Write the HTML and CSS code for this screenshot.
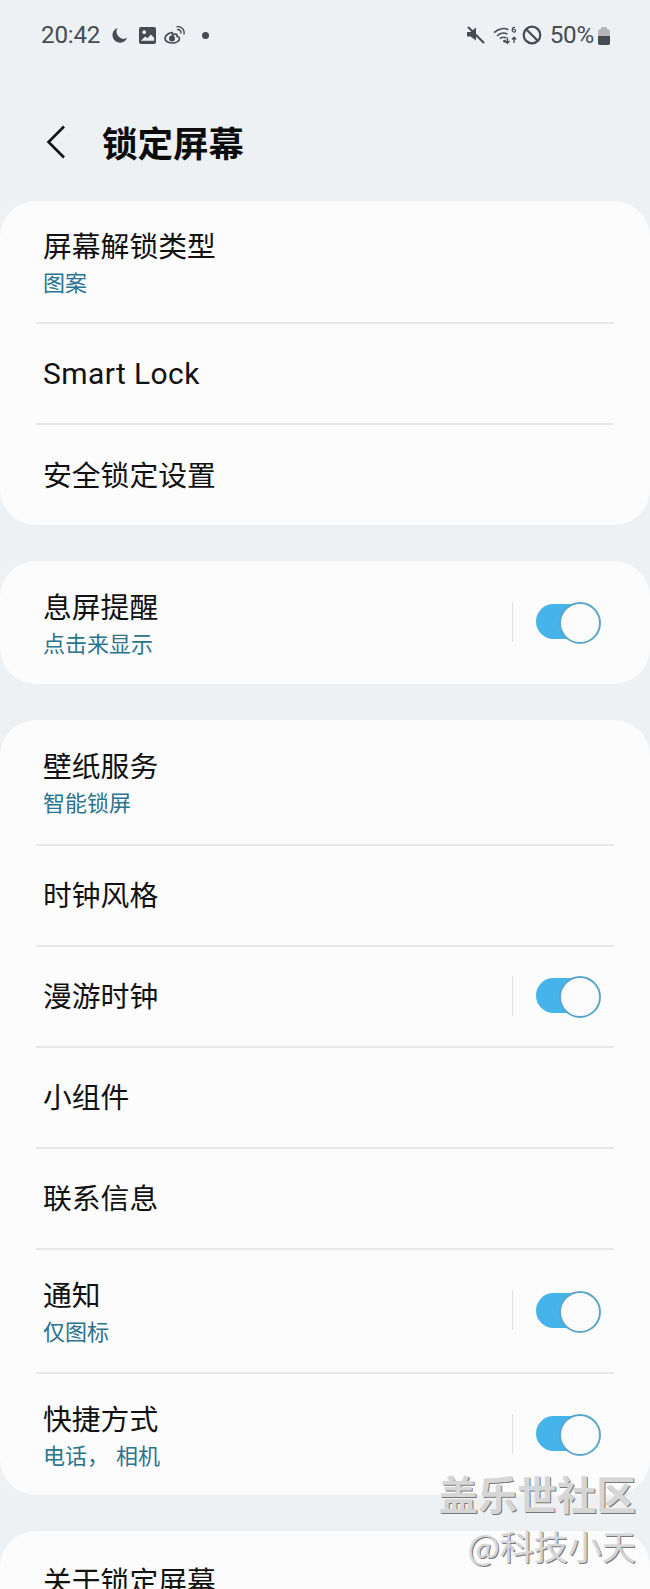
FILE: index.html
```html
<!DOCTYPE html>
<html lang="zh-CN">
<head>
<meta charset="utf-8">
<title>锁定屏幕</title>
<link rel="stylesheet" href="styles.css">
</head>
<body>
<div class="page">
  <header class="status">
    <div class="status-left">
      <span class="clock">20:42</span>
      <svg class="ic moon" viewBox="0 0 18 18"><path d="M7 1a8 8 0 1 0 10 10.5A7.5 7.5 0 0 1 7 1z"/></svg>
      <svg class="ic pic" viewBox="0 0 18 18"><path fill-rule="evenodd" d="M2 0h14a2 2 0 0 1 2 2v14a2 2 0 0 1-2 2H2a2 2 0 0 1-2-2V2a2 2 0 0 1 2-2zm0 14.500h14v-3l-3.500-3.500-3.500 4-2.500-2zM5.500 3.500a2 2 0 1 0 0 4 2 2 0 0 0 0-4z"/></svg>
      <svg class="ic weibo" viewBox="0 0 21 18"><path fill="none" stroke-width="1.700" d="M8 6.500C4 7 1 10 1 12.500 1 15 4.500 17 8.500 17s7-2.200 7-4.500c0-1.500-1.500-2-2.500-2.300.7-1.700-.8-3-4.500-1.200.3-1-.1-2.800-.5-2.500z"/><circle cx="8" cy="12.500" r="3"/><path fill="none" stroke-width="1.400" d="M13 3.600c2.500-.7 4.700 1.500 3.700 4M12.500.8c4.800-1 8.700 3 7.300 7.800"/></svg>
      <span class="dot"></span>
    </div>
    <div class="status-right">
      <svg class="ic mute" viewBox="0 0 18 18"><path d="M0 6h3.500L9 1.500v13L3.500 10.500H0z"/><path fill="none" stroke-width="2.200" d="M1 1l16 16"/></svg>
      <svg class="ic wifi" viewBox="0 0 26 20"><path fill="none" stroke-width="1.600" d="M1 7c5-5 12-5 15-3M4 10.500c3.500-3.500 8-3.500 11-2M7 13.500c2-2 4.500-2 7-1"/><circle cx="12" cy="16" r="1.500"/><path fill="none" stroke-width="1.400" d="M15 12v6m-2.200-2.200l2.200 2.400 2.200-2.400M22 18v-6m-2.200 2.200l2.200-2.400 2.200 2.400"/><path fill="none" stroke-width="1.200" d="M23 1.500c-2-.5-3 1-3 3s3 2.500 3.500 1-.8-2.500-3-1.800"/></svg>
      <svg class="ic block" viewBox="0 0 20 20"><circle cx="10" cy="10" r="8.300" fill="none" stroke-width="2.200"/><path fill="none" stroke-width="2.200" d="M4 4l12 12"/></svg>
      <span class="pct">50%</span>
      <span class="battery"><span class="battery-fill"></span></span>
    </div>
  </header>

  <div class="titlebar">
    <svg class="back" viewBox="0 0 20 34"><path d="M18 1.500L2.500 17 18 32.500"/></svg>
    <h1>锁定屏幕</h1>
  </div>

  <section class="card">
    <div class="row h121 first"><div class="text"><div class="name">屏幕解锁类型</div><div class="sub">图案</div></div></div>
    <div class="row h101"><div class="text"><div class="name latin">Smart Lock</div></div></div>
    <div class="row h102"><div class="text"><div class="name">安全锁定设置</div></div></div>
  </section>

  <section class="card">
    <div class="row h123 first"><div class="text"><div class="name">息屏提醒</div><div class="sub">点击来显示</div></div><span class="sep"></span><span class="toggle"></span></div>
  </section>

  <section class="card">
    <div class="row h124 first"><div class="text"><div class="name">壁纸服务</div><div class="sub">智能锁屏</div></div></div>
    <div class="row h101"><div class="text"><div class="name">时钟风格</div></div></div>
    <div class="row h101"><div class="text"><div class="name">漫游时钟</div></div><span class="sep"></span><span class="toggle"></span></div>
    <div class="row h101"><div class="text"><div class="name">小组件</div></div></div>
    <div class="row h101"><div class="text"><div class="name">联系信息</div></div></div>
    <div class="row h124"><div class="text"><div class="name">通知</div><div class="sub">仅图标</div></div><span class="sep"></span><span class="toggle"></span></div>
    <div class="row h123"><div class="text"><div class="name">快捷方式</div><div class="sub">电话， 相机</div></div><span class="sep"></span><span class="toggle"></span></div>
  </section>

  <section class="card last">
    <div class="row h101 first"><div class="text"><div class="name">关于锁定屏幕</div></div></div>
  </section>

  <div class="watermark">
    <div class="wm-big">盖乐世社区</div>
    <div class="wm-small">@科技小天</div>
  </div>
</div>
</body>
</html>
```

FILE: styles.css
```css
* { box-sizing: border-box; }
html, body { margin: 0; padding: 0; }
body {
  width: 650px;
  height: 1589px;
  overflow: hidden;
  background: #edf1f4;
  font-family: "Noto Sans CJK SC", "Noto Sans", sans-serif;
}
.page { position: relative; height: 1589px; overflow: hidden; }

.status {
  height: 70px;
  padding: 18px 40px 0 41px;
  display: flex;
  justify-content: space-between;
  align-items: flex-start;
  color: #474c52;
}
.status-left, .status-right { display: flex; align-items: center; height: 34px; }
.clock, .pct { font-family: Roboto, sans-serif; font-size: 24.200px; letter-spacing: -0.2px; }
.ic { fill: #474c52; stroke: #474c52; stroke-width: 0; display: block; flex: none; }
.moon { width: 17px; height: 17px; margin-left: 11px; }
.pic { width: 17px; height: 17px; margin-left: 11px; }
.weibo { width: 21px; height: 18px; margin-left: 8px; }
.dot { width: 7px; height: 7px; border-radius: 50%; background: #474c52; margin-left: 17px; }
.mute { width: 18px; height: 18px; }
.wifi { width: 25px; height: 19px; margin-left: 8px; }
.block { width: 20px; height: 20px; margin-left: 4px; }
.pct { margin-left: 8px; }
.battery {
  position: relative;
  width: 12px; height: 16px; margin: 3px 0 0 4px;
  background: #b3b7bb;
  border-radius: 3px 3px 2px 2px;
  display: flex; align-items: flex-end;
}
.battery::before {
  content: "";
  position: absolute;
  left: 3px; top: -2px;
  width: 6px; height: 3px;
  border-radius: 1px 1px 0 0;
  background: #b3b7bb;
}
.battery-fill { display: block; width: 100%; height: 9px; background: #474c52; border-radius: 0 0 2px 2px; }

.titlebar { height: 131px; padding: 12px 0 0 46px; display: flex; align-items: center; }
.back { width: 20px; height: 34px; fill: none; stroke: #111; stroke-width: 2.600; flex: none; }
h1 { margin: 0 0 0 36px; font-size: 35.500px; font-weight: 700; color: #0c0c0c; line-height: 1; letter-spacing: 0; }

.card { background: #fcfcfd; border-radius: 36px; margin-bottom: 36px; overflow: hidden; }
.row {
  display: flex;
  align-items: center;
  margin: 0 36px;
  padding: 0 0 0 7px;
  border-top: 2px solid #e6e7e9;
  position: relative;
}
.row.first { border-top: 0; }
.h101 { height: 101px; }
.h102 { height: 102px; }
.h121 { height: 121px; }
.h123 { height: 123px; }
.h124 { height: 124px; }
.text { flex: 1; margin-top: -3px; }
.name { font-size: 28.800px; line-height: 40px; color: #111; }
.latin { font-family: Roboto, sans-serif; font-size: 30px; letter-spacing: 0.4px; padding-top: 4px; }
.sub { font-size: 22px; line-height: 30px; color: #2c748c; margin-top: 1px; word-spacing: 2px; }

.sep { width: 1px; height: 40px; background: #e0e1e3; margin: -2px 23px 0 0; }
.toggle {
  position: relative;
  display: block;
  width: 64px;
  height: 35px;
  margin: -2px 14px 0 0;
  border-radius: 18px;
  background: #45b4ea;
}
.toggle::after {
  content: "";
  position: absolute;
  right: -1px; top: -2px;
  width: 38px; height: 38px;
  border-radius: 50%;
  background: #fbfbfc;
  border: 2px solid #5ba6c6;
}
.last { margin-bottom: 0; }

.watermark {
  position: absolute;
  right: 14px;
  top: 1468px;
  text-align: right;
  color: #d6d6d6;
  text-shadow: 1px 1px 0 #777, -1px 0 0 #f2f2f2;
}
.wm-big { font-size: 39.500px; font-weight: 700; line-height: 50px; letter-spacing: 0; }
.wm-small { font-size: 34px; line-height: 46px; margin-top: 5px; font-family: "Noto Sans CJK SC", sans-serif; }
```
